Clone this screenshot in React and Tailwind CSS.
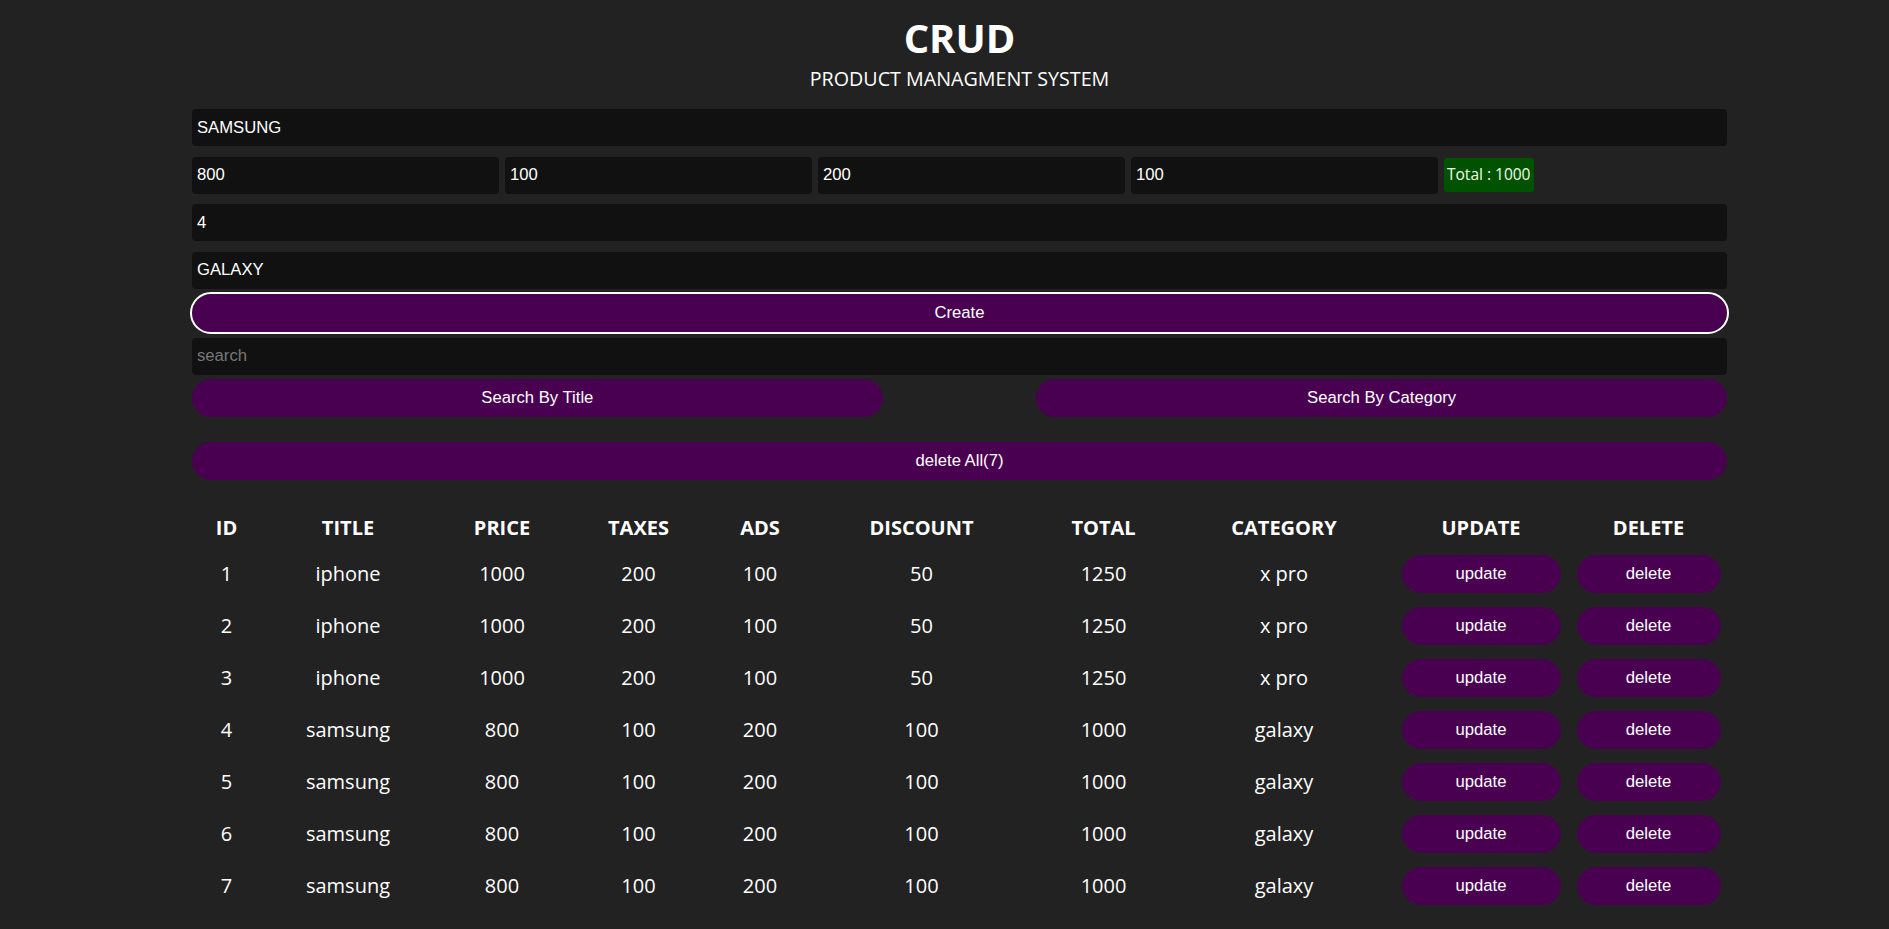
import React from "react";

const products = [
  { id: 1, title: "iphone", price: 1000, taxes: 200, ads: 100, discount: 50, total: 1250, category: "x pro" },
  { id: 2, title: "iphone", price: 1000, taxes: 200, ads: 100, discount: 50, total: 1250, category: "x pro" },
  { id: 3, title: "iphone", price: 1000, taxes: 200, ads: 100, discount: 50, total: 1250, category: "x pro" },
  { id: 4, title: "samsung", price: 800, taxes: 100, ads: 200, discount: 100, total: 1000, category: "galaxy" },
  { id: 5, title: "samsung", price: 800, taxes: 100, ads: 200, discount: 100, total: 1000, category: "galaxy" },
  { id: 6, title: "samsung", price: 800, taxes: 100, ads: 200, discount: 100, total: 1000, category: "galaxy" },
  { id: 7, title: "samsung", price: 800, taxes: 100, ads: 200, discount: 100, total: 1000, category: "galaxy" },
];

const headers = ["ID", "TITLE", "PRICE", "TAXES", "ADS", "DISCOUNT", "TOTAL", "CATEGORY", "UPDATE", "DELETE"];
const widths = ["w-[69px]", "w-[174px]", "w-[134px]", "w-[139px]", "w-[104px]", "w-[219px]", "w-[145px]", "w-[216px]", "w-[178px]", "w-[157px]"];

const inputCls =
  "h-[37px] rounded-[4px] bg-[#111111] px-[5px] text-[16.67px] text-white outline-none placeholder:text-[#777777] [font-family:'Liberation_Sans',Arial,sans-serif]";

const btnCls =
  "h-[38px] rounded-full bg-[#490050] text-[16.67px] text-white [font-family:'Liberation_Sans',Arial,sans-serif]";

export default function App() {
  return (
    <div className="min-h-screen bg-[#222222] pl-[30px] text-white [font-family:'Open_Sans',sans-serif]">
      <div className="mx-auto w-[1535px] pb-4">
        <div className="pt-[14px] text-center">
          <h1 className="text-[40px] font-bold leading-[48px]">CRUD</h1>
          <p className="mt-[3px] text-[19.7px] leading-[28px]">PRODUCT MANAGMENT SYSTEM</p>
        </div>

        <div className="mt-[16px] flex flex-col gap-[10.5px]">
          <input className={inputCls} defaultValue="SAMSUNG" />
          <div className="flex items-center gap-[6px]">
            <input className={`${inputCls} w-[307px]`} defaultValue="800" />
            <input className={`${inputCls} w-[307px]`} defaultValue="100" />
            <input className={`${inputCls} w-[307px]`} defaultValue="200" />
            <input className={`${inputCls} w-[307px]`} defaultValue="100" />
            <small className="flex h-[34px] items-center rounded-[3px] bg-[#005200] px-[3px] text-[15.5px] text-[#f0ffe8]">
              Total : 1000
            </small>
          </div>
          <input className={inputCls} defaultValue="4" />
          <input className={inputCls} defaultValue="GALAXY" />
        </div>

        <button className={`${btnCls} mt-[5px] h-[37px] w-full outline-2 outline-white`}>Create</button>

        <input className={`${inputCls} mt-[6px] h-[36px] w-full`} placeholder="search" />

        <div className="mt-[4px] flex justify-between">
          <button className={`${btnCls} w-[45%]`}>Search By Title</button>
          <button className={`${btnCls} w-[45%]`}>Search By Category</button>
        </div>

        <button className={`${btnCls} mt-[25px] h-[37px] w-full`}>delete All(7)</button>

        <table className="mt-[28px] w-full table-fixed text-center text-[20px]">
          <thead>
            <tr className="h-[40px]">
              {headers.map((h, i) => (
                <th key={h} className={`${widths[i]} font-bold`}>
                  {h}
                </th>
              ))}
            </tr>
          </thead>
          <tbody>
            {products.map((p) => (
              <tr key={p.id} className="h-[52px]">
                <td>{p.id}</td>
                <td>{p.title}</td>
                <td>{p.price}</td>
                <td>{p.taxes}</td>
                <td>{p.ads}</td>
                <td>{p.discount}</td>
                <td>{p.total}</td>
                <td>{p.category}</td>
                <td>
                  <button className={`${btnCls} h-[37px] w-[159px]`}>update</button>
                </td>
                <td>
                  <button className={`${btnCls} h-[37px] w-[144px]`}>delete</button>
                </td>
              </tr>
            ))}
          </tbody>
        </table>
      </div>
    </div>
  );
}
